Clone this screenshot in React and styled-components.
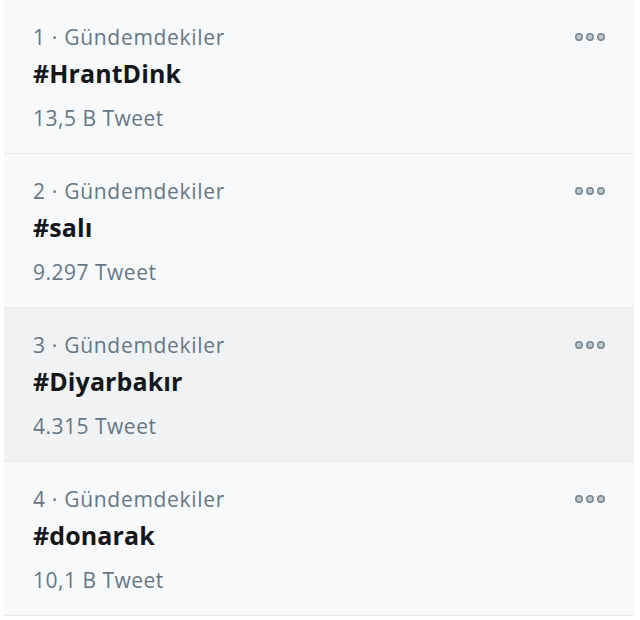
import React from 'react'
import styled, { createGlobalStyle } from 'styled-components';

const Global = createGlobalStyle`
body{
  margin:0;
  background:#ffffff;
  font-family:"Open Sans","Noto Sans",sans-serif;
}
`;

const Panel = styled.div`
width:630px;
margin-left:4px;
background:#f7f9fa;
display:flex;
flex-direction:column;
`;

const Row = styled.div`
height:154px;
box-sizing:border-box;
padding:24px 28px 0 29px;
display:flex;
justify-content:space-between;
align-items:flex-start;
border-bottom:1px solid #e6eaed;
background:${({ active }) => active ? '#f0f2f4' : '#f7f9fa'};
`;

const Info = styled.div`
display:flex;
flex-direction:column;
`;

const Label = styled.div`
font-size:21px;
line-height:26px;
color:#657786;
letter-spacing:0.7px;
`;

const Tag = styled.div`
font-size:25px;
line-height:30px;
font-weight:700;
color:#14171a;
margin-top:8px;
letter-spacing:0.1px;
`;

const Count = styled.div`
font-size:21px;
line-height:26px;
color:#657786;
margin-top:17px;
letter-spacing:0.5px;
`;

const More = styled.svg`
width:32px;
height:12px;
margin-top:7px;
`;

const Dots = () => (
  <More viewBox="0 0 32 12">
    {[5, 16, 27].map(x => (
      <circle key={x} cx={x} cy="6" r="3.2" fill="#c0c8cf" stroke="#76858f" strokeWidth="1.5" />
    ))}
  </More>
);

const trends = [
  { n: 1, tag: '#HrantDink', count: '13,5 B Tweet' },
  { n: 2, tag: '#salı', count: '9.297 Tweet' },
  { n: 3, tag: '#Diyarbakır', count: '4.315 Tweet', active: true },
  { n: 4, tag: '#donarak', count: '10,1 B Tweet' },
];

const App = () => {
  return <>
    <Global />
    <Panel>
      {trends.map(t => (
        <Row key={t.n} active={t.active}>
          <Info>
            <Label>{t.n} · Gündemdekiler</Label>
            <Tag>{t.tag}</Tag>
            <Count>{t.count}</Count>
          </Info>
          <Dots />
        </Row>
      ))}
    </Panel>
  </>
}

export default App
